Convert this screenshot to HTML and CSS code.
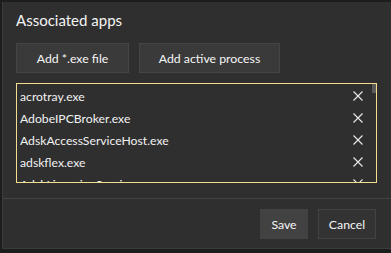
FILE: index.html
```html
<!DOCTYPE html>
<html lang="en">
<head>
  <meta charset="UTF-8">
  <title>Associated apps</title>
  <link rel="stylesheet" href="styles.css">
</head>
<body>
  <div class="dialog">
    <h1 class="title">Associated apps</h1>

    <!-- add buttons -->
    <div class="actions">
      <button class="btn add-exe">Add *.exe file</button>
      <button class="btn add-proc">Add active process</button>
    </div>

    <!-- app list -->
    <div class="list">
      <div class="row"><span>acrotray.exe</span><svg class="x" viewBox="0 0 10 10"><path d="M0.5 0.5L9.5 9.5M9.5 0.5L0.5 9.5"/></svg></div>
      <div class="row"><span>AdobeIPCBroker.exe</span><svg class="x" viewBox="0 0 10 10"><path d="M0.5 0.5L9.5 9.5M9.5 0.5L0.5 9.5"/></svg></div>
      <div class="row"><span>AdskAccessServiceHost.exe</span><svg class="x" viewBox="0 0 10 10"><path d="M0.5 0.5L9.5 9.5M9.5 0.5L0.5 9.5"/></svg></div>
      <div class="row"><span>adskflex.exe</span><svg class="x" viewBox="0 0 10 10"><path d="M0.5 0.5L9.5 9.5M9.5 0.5L0.5 9.5"/></svg></div>
      <div class="row"><span>AdskLicensingService.exe</span><svg class="x" viewBox="0 0 10 10"><path d="M0.5 0.5L9.5 9.5M9.5 0.5L0.5 9.5"/></svg></div>
      <div class="thumb"></div>
    </div>

    <div class="sep"></div>

    <div class="footer">
      <button class="btn save">Save</button>
      <button class="btn cancel">Cancel</button>
    </div>
  </div>
</body>
</html>
```

FILE: styles.css
```css
* {
  box-sizing: border-box;
}
body {
  margin: 0;
  background: #1d1d1d;
  font-family: Lato, "Noto Sans", sans-serif;
  color: #f2f2f2;
  width: 391px;
  height: 253px;
  overflow: hidden;
}
.dialog {
  margin: 2px 0 0 2px;
  width: 389px;
  height: 247px;
  background: #2f2f2f;
  border-left: 1px solid #3b3b3b;
  border-bottom: 1px solid #3b3b3b;
  padding: 8px 15px 0 13px;
  display: flex;
  flex-direction: column;
}
.title {
  margin: 0;
  font-size: 15px;
  font-weight: normal;
  line-height: 20px;
  color: #f4f4f4;
}
.actions {
  display: flex;
  gap: 10px;
  margin-top: 13px;
}
.btn {
  font-family: inherit;
  font-size: 12.3px;
  color: #f6f6f6;
  background: #3a3a3a;
  border: 1px solid #454545;
  height: 30px;
  padding: 0;
  cursor: pointer;
}
.add-exe {
  width: 113px;
}
.add-proc {
  width: 141px;
}
.list {
  position: relative;
  margin-top: 10px;
  width: 361px;
  height: 100px;
  border: 1px solid #f3dd8e;
  padding-top: 1px;
  overflow: hidden;
}
.row {
  display: flex;
  align-items: center;
  justify-content: space-between;
  height: 22px;
  padding: 0 13px 0 3px;
  font-size: 12.2px;
}
.x {
  width: 10px;
  height: 10px;
  stroke: #ececec;
  stroke-width: 1.1;
  fill: none;
}
.thumb {
  position: absolute;
  right: 0;
  top: 0;
  width: 4px;
  height: 9px;
  background: #5b5b5b;
}
.sep {
  margin: 15px -15px 0 -13px;
  height: 1px;
  background: #434343;
}
.footer {
  display: flex;
  justify-content: flex-end;
  gap: 10px;
  margin-top: 10px;
}
.save {
  width: 48px;
  background: #424242;
  border-color: #424242;
}
.cancel {
  width: 58px;
  background: #333333;
  border-color: #434343;
}
```
